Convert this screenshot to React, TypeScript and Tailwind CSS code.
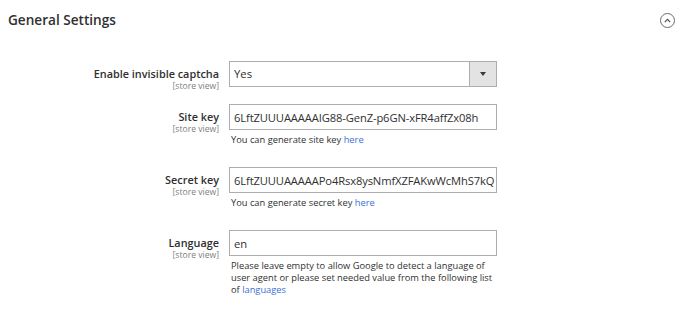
import React from "react";

const LINK = "text-[#3b6fd6] no-underline";

function Label({ text }: { text: string }) {
  return (
    <div className="w-[219px] shrink-0 pt-[5px] text-right">
      <div className="text-[10.85px] font-semibold leading-[16px] text-[#303030]">{text}</div>
      <div className="text-[8.6px] leading-[8px] text-[#808080]">[store view]</div>
    </div>
  );
}

function TextField({ value }: { value: string }) {
  return (
    <input
      type="text"
      readOnly
      value={value}
      className="block h-[26px] w-full border border-[#adadad] bg-white pl-[4px] pr-0 text-[11.2px] tracking-[-0.12px] text-[#303030] outline-none"
    />
  );
}

function Note({ children }: { children: React.ReactNode }) {
  return <div className="mt-[4px] pl-[2px] text-[9.3px] leading-[12px] text-[#303030]">{children}</div>;
}

export default function App() {
  return (
    <div className="h-[313px] w-[685px] bg-white font-['Open_Sans',sans-serif]">
      {/* Section header */}
      <div className="flex items-center justify-between pl-[8px] pr-[10px] pt-[10px]">
        <h2 className="text-[13.6px] font-semibold leading-[20px] text-[#303030]">General Settings</h2>
        <span className="mt-px flex h-[15px] w-[15px] items-center justify-center rounded-full border border-[#6b6b6b]">
          <svg width="7" height="5" viewBox="0 0 7 5" fill="none">
            <path d="M0.8 4.2 L3.5 1.3 L6.2 4.2" stroke="#4d4d4d" strokeWidth="1.1" />
          </svg>
        </span>
      </div>

      {/* Fields */}
      <div className="mt-[31px] flex flex-col">
        <div className="mb-[14px] flex gap-[10px]">
          <Label text="Enable invisible captcha" />
          <div className="w-[268px]">
            <div className="flex h-[26px] border border-[#adadad] bg-white">
              <div className="flex flex-1 items-center px-[4px] text-[11.35px] text-[#303030]">Yes</div>
              <div className="flex w-[27px] items-center justify-center border-l border-[#adadad] bg-[#e3e3e3]">
                <svg width="6" height="4" viewBox="0 0 6 4">
                  <path d="M0 0 H6 L3 4 Z" fill="#41362f" />
                </svg>
              </div>
            </div>
          </div>
        </div>

        <div className="mb-[21px] flex gap-[10px]">
          <Label text="Site key" />
          <div className="w-[268px]">
            <TextField value="6LftZUUUAAAAAIG88-GenZ-p6GN-xFR4affZx08h" />
            <Note>
              You can generate site key <a className={LINK}>here</a>
            </Note>
          </div>
        </div>

        <div className="mb-[21px] flex gap-[10px]">
          <Label text="Secret key" />
          <div className="w-[268px]">
            <TextField value="6LftZUUUAAAAAPo4Rsx8ysNmfXZFAKwWcMhS7kQ" />
            <Note>
              You can generate secret key <a className={LINK}>here</a>
            </Note>
          </div>
        </div>

        <div className="flex gap-[10px]">
          <Label text="Language" />
          <div className="w-[268px]">
            <TextField value="en" />
            <Note>
              Please leave empty to allow Google to detect a language of user agent or please set
              needed value from the following list of <a className={LINK}>languages</a>
            </Note>
          </div>
        </div>
      </div>
    </div>
  );
}
